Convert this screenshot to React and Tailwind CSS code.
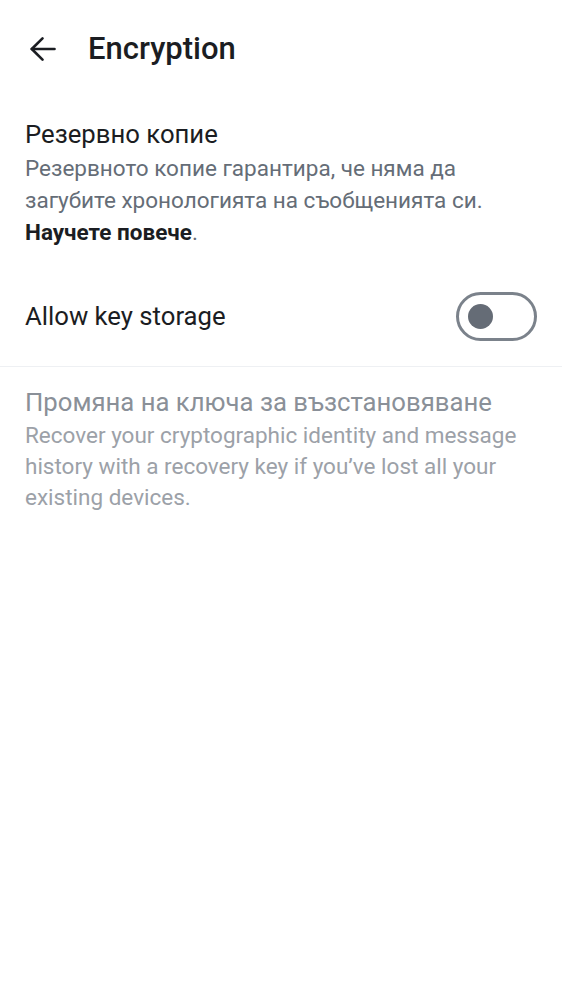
import { useState } from "react";

function BackArrow() {
  return (
    <svg width="26" height="26" viewBox="0 0 26 26" fill="none" stroke="#1b1d22" strokeWidth="2.6" strokeLinecap="round" strokeLinejoin="round">
      <path d="M24.5 13H1.8" />
      <path d="M12.5 2.3L1.8 13L12.5 23.7" />
    </svg>
  );
}

function Toggle({ on, onChange }) {
  return (
    <button
      onClick={() => onChange(!on)}
      className="w-[81px] h-[49px] rounded-full border-[3px] border-[#7b828b] bg-white flex items-center px-[9px] shrink-0"
    >
      <span className={"w-[25px] h-[25px] rounded-full bg-[#656c76] " + (on ? "ml-auto" : "")} />
    </button>
  );
}

export default function App() {
  const [allow, setAllow] = useState(false);

  return (
    <div className="w-[562px] h-[1000px] bg-white" style={{ fontFamily: "Roboto, 'Noto Sans', sans-serif" }}>
      {/* Top bar */}
      <div className="h-[98px] flex items-center pl-[30px]">
        <BackArrow />
        <h1 className="ml-[32px] text-[31px] font-medium text-[#1b1d22]">Encryption</h1>
      </div>

      {/* Backup */}
      <div className="px-[25px] pt-[19px]">
        <div className="text-[25.7px] leading-[35px] text-[#1b1d22]">Резервно копие</div>
        <div className="text-[22.5px] leading-[32px] text-[#656d77]">
          Резервното копие гарантира, че няма да загубите хронологията на съобщенията си.{" "}
          <span className="font-bold text-[#1b1d22]">Научете повече</span>.
        </div>
      </div>

      <div className="flex items-center justify-between pl-[25px] pr-[25px] pt-[44px] pb-[25px] border-b border-[#eef0f3]">
        <span className="text-[25.7px] text-[#1b1d22]">Allow key storage</span>
        <Toggle on={allow} onChange={setAllow} />
      </div>

      {/* Recovery key (disabled) */}
      <div className="px-[25px] pt-[18px]">
        <div className="text-[25.7px] leading-[35px] text-[#8a9098]">Промяна на ключа за възстановяване</div>
        <div className="text-[22.5px] leading-[31px] text-[#9ca1a8]">
          Recover your cryptographic identity and message history with a recovery key if you’ve lost all your existing devices.
        </div>
      </div>
    </div>
  );
}
